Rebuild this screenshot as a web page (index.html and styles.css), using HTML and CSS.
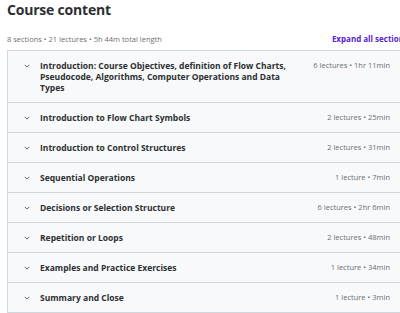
FILE: index.html
```html
<!DOCTYPE html>
<html lang="en">
<head>
    <meta charset="UTF-8">
    <meta name="viewport" content="width=device-width, initial-scale=1.0">
    <title>Course content</title>
    <link rel="stylesheet" href="styles.css">
</head>
<body>
    <div class="course-content">
        <h2>Course content</h2>

        <div class="summary-bar">
            <span class="summary">8 sections • 21 lectures • 5h 44m total length</span>
            <button class="expand-all">Expand all sections</button>
        </div>

        <div class="sections">
            <div class="section">
                <svg class="chevron" viewBox="0 0 8 5"><polyline points="1,1 4,4 7,1"/></svg>
                <span class="section-title">Introduction: Course Objectives, definition of Flow Charts, Pseudocode, Algorithms, Computer Operations and Data Types</span>
                <span class="section-meta">6 lectures • 1hr 11min</span>
            </div>
            <div class="section">
                <svg class="chevron" viewBox="0 0 8 5"><polyline points="1,1 4,4 7,1"/></svg>
                <span class="section-title">Introduction to Flow Chart Symbols</span>
                <span class="section-meta">2 lectures • 25min</span>
            </div>
            <div class="section">
                <svg class="chevron" viewBox="0 0 8 5"><polyline points="1,1 4,4 7,1"/></svg>
                <span class="section-title">Introduction to Control Structures</span>
                <span class="section-meta">2 lectures • 31min</span>
            </div>
            <div class="section">
                <svg class="chevron" viewBox="0 0 8 5"><polyline points="1,1 4,4 7,1"/></svg>
                <span class="section-title">Sequential Operations</span>
                <span class="section-meta">1 lecture • 7min</span>
            </div>
            <div class="section">
                <svg class="chevron" viewBox="0 0 8 5"><polyline points="1,1 4,4 7,1"/></svg>
                <span class="section-title">Decisions or Selection Structure</span>
                <span class="section-meta">6 lectures • 2hr 6min</span>
            </div>
            <div class="section">
                <svg class="chevron" viewBox="0 0 8 5"><polyline points="1,1 4,4 7,1"/></svg>
                <span class="section-title">Repetition or Loops</span>
                <span class="section-meta">2 lectures • 48min</span>
            </div>
            <div class="section">
                <svg class="chevron" viewBox="0 0 8 5"><polyline points="1,1 4,4 7,1"/></svg>
                <span class="section-title">Examples and Practice Exercises</span>
                <span class="section-meta">1 lecture • 34min</span>
            </div>
            <div class="section">
                <svg class="chevron" viewBox="0 0 8 5"><polyline points="1,1 4,4 7,1"/></svg>
                <span class="section-title">Summary and Close</span>
                <span class="section-meta">1 lecture • 3min</span>
            </div>
        </div>
    </div>
</body>
</html>
```

FILE: styles.css
```css
body {
    font-family: 'Open Sans', 'Liberation Sans', sans-serif;
    background-color: #ffffff;
    color: #2d2f31;
    margin: 0;
    overflow: hidden;
}
.course-content {
    width: 400px;
    margin-left: 7px;
    padding-top: 1px;
}
h2 {
    margin: 0;
    font-size: 14px;
    line-height: 18px;
    font-weight: 700;
    letter-spacing: -0.2px;
}
.summary-bar {
    display: flex;
    justify-content: space-between;
    align-items: center;
    margin-top: 14px;
    margin-bottom: 6px;
    height: 11px;
}
.summary {
    font-size: 7.5px;
    color: #6a6f73;
}
.expand-all {
    background: none;
    border: none;
    padding: 0;
    margin-right: -1px;
    font-family: inherit;
    font-size: 8px;
    font-weight: 700;
    color: #5624d0;
    cursor: pointer;
}
.sections {
    border: 1px solid #d1d7dc;
    border-right: none;
}
.section {
    display: flex;
    align-items: flex-start;
    gap: 8px;
    background-color: #f7f9fa;
    padding: 9px 17px 9px 15px;
    border-bottom: 1px solid #d1d7dc;
}
.section:last-child {
    border-bottom: none;
}
.chevron {
    width: 6px;
    height: 4px;
    margin: 4px 2px 0 1px;
    fill: none;
    stroke: #2d2f31;
    stroke-width: 1;
    flex-shrink: 0;
}
.section-title {
    flex: 1;
    font-size: 8.5px;
    line-height: 11px;
    font-weight: 700;
}
.section-meta {
    margin-left: 18px;
    font-size: 7.5px;
    line-height: 11px;
    color: #6a6f73;
    white-space: nowrap;
}
```
